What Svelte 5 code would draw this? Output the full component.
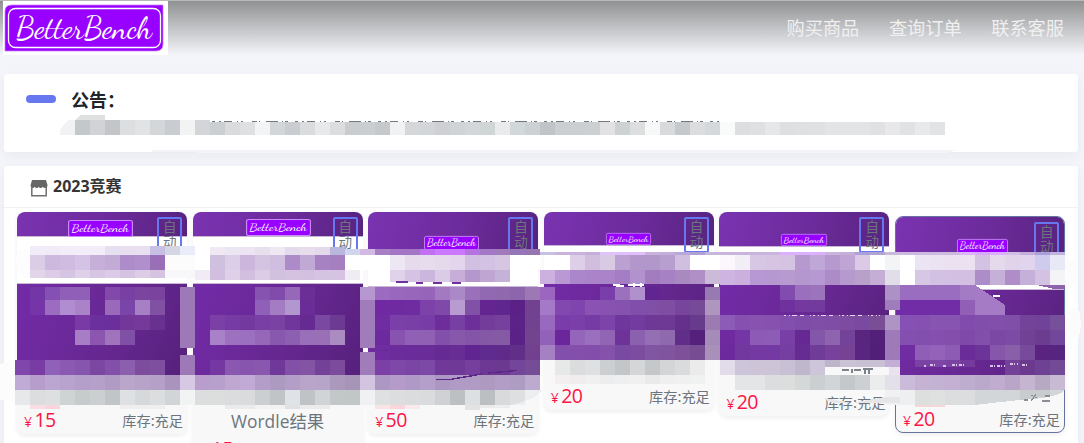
<script>
  const nav = ['购买商品', '查询订单', '联系客服'];

  // head: purple strip above the white band, band: white strip, body: purple block below
  const goods = [
    { head: 24, band: 48, body: 91, h: 222, price: '15', lx: 51, ly: 8, lw: 65, lh: 17 },
    { head: 24, band: 48, body: 91, h: 252, price: '15', lx: 53, ly: 7, lw: 65, lh: 17, title: 'Wordle结果' },
    { head: 37, band: 38, body: 88, h: 222, price: '50', lx: 56, ly: 24, lw: 55, lh: 14 },
    { head: 33, band: 39, body: 76, h: 198, price: '20', lx: 62, ly: 21, lw: 45, lh: 12 },
    { head: 34, band: 38, body: 76, h: 204, price: '20', lx: 62, ly: 22, lw: 46, lh: 12 },
    { head: 36, band: 37, body: 85, h: 217, price: '20', lx: 61, ly: 22, lw: 51, lh: 14, hover: true }
  ];

  // Tile runs: [x, y, height, colours], each tile 15px wide, "-" leaves a hole
  const runs = [
    [60, 120, 15, 'f1f2f4 c3c8cb d1d3d7 c2c6c9 dddee0 e2e3e5 d3d7da c9cdd1 f2f4f4 d3d5d9'],
    [210, 122, 13, 'cbcfd2 dadbdd dfe0e2 f3f4f6 d2d6d9 c9ccd0 dbdcde e8e9eb dcdddf c9cdcf caced0 c5c9cb f1f2f4 d6d7da d3d6d8 cfd0d4 d0d4d6 d3d7d9 d0d5d6 e9ebec d2d7d9 ccd1d3 c0c4c9 cbcfd1 cccfd2 ccd0d2 e2e2e4 cdd2d4 dddee0 f7f9f8 d9dadb c5c9cc dcdddf d5d9db f8fbfa dddee0 dfe0e1 e6e7e9 dddfe0 dfe0e1 e0e1e2 e3e4e6 e3e4e5 e3e4e6 e0e1e3 e8e8ea e1e2e3 e8e9eb e2e3e5'],

    [30, 246, 9, 'f2ecf8 f0ebf7 f2edf8 f2edf8 f2edf8 e6dff0 e8e0f0 e8e0ef c8c0e4 d4d6e6 eaecf9'],
    [30, 255, 15, 'dccde6 cdb9de d0bce0 d4c3e4 c6b0d9 c2abd5 ae8bc9 b08fcd 9970b8 fcfcfd fcfcfd'],
    [30, 270, 8, 'e2d5ea ddcce7 d6c4e3 dfd0e9 d6c5e3 dccbe6 d5c3e1 dccce6 d6c3e2 f8f7fa f8f7fa'],
    [30, 287, 13, '7236a6 8550b4 9060b8 9060b8 - 8249aa 7840a2 7b459f 7a449e'],
    [30, 300, 15, '7535a8 9b6cbf b08cd0 a982c7 - 9a69ba 7a45a8 a67fc4 8051a3'],
    [75, 315, 15, '793aa6 6c2f9e 6b2f9b 733699 74399a 68308f'],
    [75, 330, 15, 'a77dc5 8b55b0 a074bd 8050a6'],
    [15, 360, 15, '8046ac 793ca5 9061b8 8b59b2 8655ae 7b47a3 8250a8 8b5eae 7d4c9f 7e4f9f'],
    [15, 375, 15, 'c0aad6 b69dcb bba5d1 b8a2ce b39fc9 b4a0c9 af9bc3 baa6cb b6a3c8 b5a1c8 aa94bd d7c8e3'],
    [15, 390, 15, 'e6e8e9 dcdddf dedfe1 ced3d3 c6cbcc cbcfd1 c0c5c8 dfe0e2 d5d9db dcddde d2d5d7 f2f4f3'],
    [30, 405, 4, 'f9dde2 fbd5dd - - - - efeff0 efeff0 efeff0'],
    [180, 287, 61, '9d79b8'],
    [180, 355, 20, '9d79b8'],

    [210, 247, 8, 'f0e8f2 ece6f2 ece4f2 e8dfed efe7f2 e4daee e8dcec e3d9eb bab7de'],
    [345, 249, 6, 'd1d5ed d2b8e3'],
    [210, 255, 15, 'd0c0e0 dccde8 ccb6db d4c3e1 cfbedf ac8bc8 c0a9d4 a682c2 a57fc0 ffffff ffffff'],
    [195, 270, 10, 'f0ebf5 d2bfdf dfcfe8 d2bfe0 dccce6 d2c0df d5c2e1 d3bfdf d5c4e1 d5c3e1 f0ecf4'],
    [255, 287, 13, '8654b0 814bac 9767b9 6a2e96'],
    [255, 300, 15, '9060b8 a47cc3 b297cf 6a2d97'],
    [210, 315, 15, '7b40a6 763ba5 74399f 793fa4 7a42a3 71369b 662b93 7b48a1 6c3a92'],
    [210, 330, 15, 'a881c9 9e71c0 9c70c0 9667b9 8858ae 8c5fb0 996fb9 996fb6 aa8bc2'],
    [210, 360, 15, '7538a3 8b58b1 8855ae 8957ae 703898 8250a7 8454a4 744199 7d4b9c'],
    [195, 375, 15, 'b99dcc b8a0cd bfa7d2 c1aad5 b49dc9 ad9ac0 b29ec7 b8a5c9 b6a5c9 ac98bd a795b8 d3c5df'],
    [195, 390, 15, 'dcddde dcdddd dbdcdd d9dbdd cbcfd2 c0c4c7 dfe2e6 c0c3c6 d1d4d6 c2c7c8 c1c6c7 f1f1f3'],
    [225, 405, 4, 'ebebec ebebec f2f2f3 f2f2f3 e0e1e3 ebebeb ebebeb'],
    [360, 287, 13, 'b697cf'],
    [360, 300, 48, 'a17cbb'],
    [360, 352, 23, 'a17cbb'],
    [360, 375, 15, 'd3c5df'],

    [375, 249, 6, 'a87fc4 a375c4 a375c4 c070f0 cc78ff cc77fe b473e0 a377c5 a07abb 9675b8 9675b0'],
    [375, 255, 15, 'ffffff ede7f4 e7daec e7dcee e5d9ec e2d5ec d2c0e2 d3c2e4 d6c6e2 ffffff ffffff'],
    [390, 270, 12, 'e0d3e9 d6c2e3 cbb6dd dacbe6 c6aed9 b498cd bfa5d2 c5b2d9'],
    [375, 287, 13, '9b6bc0 9967be 9866bb 9664b8 a37ac1 ab89c7 9b70ba 9169b3 8f68ae 8d65ad 9c79b4'],
    [375, 300, 15, '7029a3 6f2aa1 6f2ba0 7c42aa 7f49a9 b79bd1 8151a8 642590 60268f 5b2186 71428f'],
    [375, 315, 15, '702ca1 7b3faa 7a3fa6 783ca6 6d2e9b 773fa4 6d2f99 733b9a 75419c 5b2388 71428f'],
    [375, 330, 15, '6c2a9f 8853b0 905fb6 9060b5 8250aa 8757ab 8354a7 8458a5 835aa3 5a2287 73448e'],
    [375, 345, 15, '702da2 6c2d9b 6b2c9b 6a2c98 662a95 682d95 602590 602b8e 5f2a89 622f88 71418f'],
    [375, 360, 15, '7b3fa6 7e48a9 7b45a5 7d49a6 703999 6f3997 773f9d 6c3893 6b3990 74469b 754d96'],
    [375, 375, 15, 'ad98c4 b49bc9 af99c6 b39fc9 ac97c2 af9bc5 b09bc4 ae99c0 b29dc6 af9cc2 bcabcf'],
    [375, 390, 15, 'dfe1e1 dcdddf dbdcde d9dbdc cfd1d4 bcc0c3 dde0e3 bbbfc2 d8dadc dedfe1'],
    [375, 405, 4, 'f8e5e8 f9d5da fbeaed'],
    [465, 405, 5, 'e3e3e4'],
    [480, 405, 3, 'ebebec ebebec'],

    [540, 252, 3, 'c8c0e0 c9b3dd c9b3dd c4aedb dfc3fa e0bfff e0bfff c9b3dd c4aedb b9a8dc b0a0d4 c4b8df'],
    [555, 255, 15, 'ffffff decfe9 d1bedf d9cae4 bba0d2 b396cc b297cb b79fd0 d1bfe0 ffffff ffffff'],
    [540, 270, 14, 'cbb0e0 ba98d4 ac86cb ab83c9 aa84c9 a57dc4 b192cd a27cbf a681c3 a889c0 af8fc6 cbbbd9'],
    [540, 287, 13, '9a66c0 - - - 7a3eab 9b70bc b091cd 602591 - - - 977ab1'],
    [540, 300, 15, 'a379c8 8248b0 8044ae 8952b3 8752b0 8552ad 824eab 8050a7 7f4ea3 77459b 764a97 ae96bf'],
    [540, 315, 15, '9968bf 793caa 7a3fa8 763ba4 7c44a8 6f379d 733b9f 6d3896 6e3895 65308c 673a8c 9c7bb1'],
    [540, 330, 15, '9261ba 6b269c 9564bb 9a6fbe 9264b4 6d3399 8b60ae 956fb4 8f69ad 602d88 54207c a58bb7'],
    [540, 345, 15, 'a581c3 834fad 834fab 834eab 8453a9 784aa2 7c4ca1 8055a1 81549f 7e509a 774c92 a890b9'],
    [555, 360, 15, 'e7e9e9 dbdcdd dfe0e2 cbcfd1 c2c6c9 d5d6d8 c4c8cb d3d5d6 dadbdc ebebeb'],
    [555, 375, 9, 'f3eff0 f1edee f1f0f0 ededed eeeff0 f0f0f0 eaeaeb efefef f0f0f0 f0f1f1'],

    [720, 252, 3, 'c9b5dc c9b5dc c9b5dc c9b5dc dcb0ff dcb0ff dcb0ff c9b5dc c4aedb aca0da b4a4d0 cab9dd'],
    [720, 255, 15, 'fbf7fc f2eef5 d7c7e4 d6c4e2 d4c4e1 b699cf bfa7d7 b699cf bea5d4 dacae6 ffffff f2f4f5'],
    [720, 270, 15, 'ceb4e0 cbafdc b898d4 b698d0 b79ad0 b497ce b898d2 ac8bc6 b59acd b8a0cb c4aed5 e1dde9'],
    [780, 285, 15, '814cae 9a70be 9c74bb'],
    [780, 300, 12, '6e319d 74389f 733a9e'],
    [720, 315, 15, '8c5bb8 8650b1 8752b0 8651af 834fae 804ca9 804ea7 7f4da6 7d4ca1 794aa0 7a4d97 a98cc3'],
    [720, 330, 15, '6f2a9f 7435a5 8d5ab6 8d5cb5 7840a6 662893 8456a9 8d64ad 734299 5a257f 521f79 9d7ab9'],
    [720, 345, 15, '6c299d 7337a0 7439a3 7439a3 753ea1 662c91 6f3c97 78429c 754294 592581 511f78 9d7ab9'],
    [720, 360, 15, 'e1dbea cdc5d9 cdc4d8 cdc4d8 c8c1d5 bfb8cd cdc5da'],
    [825, 360, 7, 'bfb5cb cac2d5 c8c0d3 c8c0d3'],
    [885, 360, 7, 'c3aed5'],
    [885, 367, 8, 'e9e3ef'],
    [735, 375, 15, 'e4e5e7 e3e5e6 dcddde dcdddd d5d8d9 cbcfd2 d2d5d8 c4c8cb ccd0d3 ebedec e3e1ec'],
    [885, 285, 15, 'ac91c6 9b6dc0 9b6dc0 9b6dc0 9b6dc0 a37bc5'],
    [885, 300, 10, '9f7cba'],
    [900, 300, 15, '702da5 702da5 702da5 702da5 925fb7 a77dc5'],

    [900, 252, 3, 'cdbbdf cdbbdf cdbbdf cdbbdf dcb4fa d9a9ff dcaeff d0bce4 c4aedb aaa0dc c0b4dc'],
    [900, 255, 15, 'ffffff ebe4f2 ece3f2 ebe1f1 ebe1f1 d3c2e2 e5daec e0d3ea e0d5ec cfcbec e7e9f7'],
    [900, 270, 15, 'ffffff d6c7e4 d3c1e3 d2bfe2 d2bfe2 ad8dc8 c5b1d8 ae8dc9 c5b0d9 d4c2e2 f4f4f6'],
    [885, 315, 15, 'ae94c5 8651b4 8550b2 8854b1 8755b1 804bad 814eac 8250aa 804fa7 724399 71429a 76509a'],
    [885, 330, 15, '9f7ab9 8450af 834fae 844fae 834eac 7e49a8 8250aa 7b48a4 7c4ca4 704195 6b3c90 70479a'],
    [885, 345, 15, '9f7ab9 702ca3 8f5eb7 9463b9 8d5bb3 6a2c98 6c3499 8556a9 8a5faa 774a9b 59237f 562580'],
    [915, 360, 7, '7a42a3 7d47a5 7a43a1 743b9c'],
    [1005, 360, 15, '744198 6b3a8f 6e4194 724a95'],
    [885, 375, 15, 'e3e0ea cabbdb c6b3d4 c4b2d5 c4b0d2 beadcf bba9cc bfacce b9a5c7 c5b5d1 b7a9c3 c9bad4'],
    [885, 390, 15, 'f0f1f2 eeeff0 dddfdf dfe1e1 dcdddf dbddde'],
    [915, 405, 2, 'f7d6da f7d6da']
  ];

  const tiles = runs.flatMap(([x, y, h, colours]) =>
    colours.split(' ').map((c, i) => ({ x: x + i * 15, y, h, c })).filter((t) => t.c !== '-')
  );
</script>

{#snippet logo(cls)}
  <svg class={cls} viewBox="0 0 165 54" preserveAspectRatio="none">
    {#if cls === 'brand'}
      <rect width="165" height="54" fill="#fff" />
      <path d="M2 10Q2 4 9 4H160V43Q160 50 153 50H2Z" fill="#9800ff" stroke="#c77bff" stroke-width=".7" />
      <rect x="5.5" y="7.5" width="152" height="39" rx="7" fill="none" stroke="#fff" stroke-width="1.3" />
    {:else}
      <rect x="1.5" y="1.5" width="162" height="51" rx="6" fill="#9800ff" stroke="#c98af8" stroke-width="3" />
    {/if}
    <text x={cls === 'brand' ? 13 : 9} y={cls === 'brand' ? 36.5 : 39} textLength={cls === 'brand' ? 136 : 146} lengthAdjust="spacingAndGlyphs">BetterBench</text>
  </svg>
{/snippet}

<div class="page">
  <header>
    {@render logo('brand')}
    <nav>
      {#each nav as item}<a href="#top">{item}</a>{/each}
    </nav>
  </header>

  <section class="notice">
    <span class="pill"></span>
    <h2>公告：</h2>
  </section>

  <section class="shop">
    <div class="shop-head">
      <svg width="18" height="18" viewBox="0 0 18 18">
        <path d="M2 1H16L17.6 6.5Q17.2 9 15.2 9Q13.4 9 12.8 7.8Q12 9 10.6 9Q9.3 9 8.8 7.8Q8 9 6.8 9Q5.4 9 4.8 7.8Q4 9 2.7 9Q.8 9 .5 6.5Z" fill="#666" />
        <path d="M1.8 8V16.8H16.2V8" fill="none" stroke="#707070" stroke-width="1.5" />
      </svg>
      <h3>2023竞赛</h3>
    </div>
    <div class="goods">
      {#each goods as g}
        <article class:hover={g.hover} class:tall={g.title} style:height="{g.h}px">
          <div class="cover">
            <div class="head" style:height="{g.head}px"></div>
            <div class="band" style:height="{g.band}px"></div>
            <div class="body" style:height="{g.body}px"></div>
            <div class="mini" style:left="{g.lx}px" style:top="{g.ly}px" style:width="{g.lw}px" style:height="{g.lh}px">
              {@render logo('small')}
            </div>
            <span class="tag">自动</span>
          </div>
          {#if g.title}<h4>{g.title}</h4>{/if}
          <footer>
            <span class="price">{#if !g.title}<i>¥</i>{/if}{g.price}</span>
            {#if !g.title}<span class="stock">库存:充足</span>{/if}
          </footer>
        </article>
      {/each}
    </div>
  </section>

  <svg class="mosaic" width="1084" height="443" viewBox="0 0 1084 443" shape-rendering="crispEdges">
    <path d="M152 150H956L949 153H208L187 152H152Z" fill="#f3f4f7" />
    <path d="M75 120L80 115H105V120Z" fill="#dfe1e0" />
    <path d="M212 121.5H722" stroke="#747980" stroke-dasharray="3 4 2 3 8 5 1 3 2 9 5 2 1 6 12 4 1 2 3 7" />
    <path d="M0 364L15 359V402L0 400Z" fill="#fcfcfc" />
    <path d="M1065 255Q1077 260 1077 272Q1077 286 1065 288ZM1065 308H1078Q1083 320 1079 337H1072Q1072 362 1065 364Z" fill="#fcfcfc" />
    <path d="M17 250H30V278H26Q17 275 16 262Z" fill="#fdfcfe" />
    {#each tiles as t}
      <rect x={t.x} y={t.y} width="15" height={t.h} fill="#{t.c}" />
    {/each}
    <path d="M60 120H69Q62 124 60 133Z" fill="#fff" />
    <path d="M975 285H1065V289H985Z" fill="#fff" />
    <path d="M975 285L1005 305V315H975Z" fill="#a47bc4" />
    <path d="M1037 285H1065V289H1054Z" fill="#8c65aa" />
    <path d="M993 296H1000" stroke="#fff" stroke-width="1.5" />
    <path d="M975 390H1065Q1058 398 1020 400Q1000 402 975 405Z" fill="#d3d6d8" />
    <path d="M1020 390H1050V396L1020 400Z" fill="#c8ccce" />
    <path d="M525 390H543Q536 398 525 401Q510 406 495 408V405H525Z" fill="#eceef0" />
    <path d="M825 398L852 403L885 397H900V403H855L835 403L825 400Z" fill="#e6e6e8" />
    <path d="M368 349.5H393L427 348.5" stroke="#6b2c9b" stroke-width="2" fill="none" />
    <path d="M436 379.5H450L482 374M488 373L517 370.5" stroke="#5c2588" stroke-width="1.4" fill="none" />
    <path d="M396 282H408M416 283H423M433 283H442M452 283H461" stroke="#7030a0" stroke-width="1.5" />
    <path d="M613 285H620M616 286H624M628 285H644M634 283V287M641 283V287" stroke="#fff" stroke-width="1.4" />
    <path d="M784 315.5H880" stroke="#e6d9ee" stroke-dasharray="2 3 1 2 5 3 4 6 1 2" />
    <path d="M924 366H926M930 365H936M943 366H947M952 365H966M990 366H1005M1010 364H1018M1022 365H1028" stroke="#d6c2e2" stroke-width="2" stroke-dasharray="3 1 1 2" />
    <path d="M837 368L855 373H875V375H885V367H889V375H862Z" fill="#f8f8f8" />
    <path d="M842 370H849M852 369V373M854 370H861M863 369H873M865 369V374M869 370V374" stroke="#7b828a" stroke-width="1.3" />
    <path d="M1031 395L1037 398M1036 394L1031 401M1045 396H1050M1042 401H1050M1024 400H1028" stroke="#8a8f95" stroke-width="1.3" />
  </svg>
</div>

<style>
  :global(body) { background: #f4f5fa; }
  .page {
    position: relative;
    width: 1084px;
    height: 443px;
    overflow: hidden;
    background: #f4f5fa;
    font-family: "Open Sans", "Noto Sans CJK SC", sans-serif;
  }
  header {
    box-sizing: border-box;
    height: 55px;
    display: flex;
    justify-content: space-between;
    align-items: flex-start;
    padding: 0 20px 0 3px;
    border-top: 1px solid #b6b9ba;
    background: linear-gradient(#8f9192, #f4f5fa);
  }
  .brand { display: block; width: 165px; height: 54px; flex: none; }
  svg text { font: 32px "Dancing Script", cursive; fill: #fff; }
  nav { display: flex; gap: 29.6px; padding-top: 12px; }
  nav a { font: 18.2px/28px "Noto Sans CJK SC", sans-serif; color: #f0f0f0; text-decoration: none; }
  section { margin: 0 6px 0 4px; background: #fff; border-radius: 3px; box-shadow: 0 4px 12px rgba(40, 40, 70, .05); }
  .notice { box-sizing: border-box; height: 78px; margin-top: 19px; padding: 12px 22px; display: flex; gap: 15px; }
  .pill { width: 30px; height: 8px; margin-top: 9px; border-radius: 4px; background: #6777ef; }
  h2, h3, h4 { margin: 0; }
  h2 { font: bold 18px/26px "Noto Sans CJK SC", sans-serif; color: #212529; }
  .shop { margin-top: 14px; height: 300px; }
  .shop-head { box-sizing: border-box; height: 42px; display: flex; align-items: center; gap: 6px; padding-left: 26px; border-bottom: 1px solid #f1f1f3; }
  .shop-head svg { margin-top: 2px; }
  h3 { font-size: 16px; line-height: 24px; margin: -2px 0 0 -1px; color: #343434; }
  .goods { display: flex; align-items: flex-start; gap: 5.6px; padding: 4px 0 0 13px; }
  article {
    width: 170px;
    flex: none;
    box-sizing: border-box;
    display: flex;
    flex-direction: column;
    overflow: hidden;
    border-radius: 8px;
    background: #f8f8f8;
    box-shadow: 0 2px 5px rgba(0, 0, 0, .07);
  }
  article.hover { margin-top: 4px; border: 1px solid #66749f; }
  .cover { position: relative; flex: none; }
  .head { background: linear-gradient(100deg, #7a33b1, #6c2b9b 55%, #57237f); }
  .band { background: #fff; box-sizing: border-box; border: solid #c9b8d4; border-width: 1px 0; }
  .body { background: linear-gradient(115deg, #732ba8, #65278f 60%, #55207b); }
  .mini { position: absolute; }
  .small { display: block; width: 100%; height: 100%; overflow: visible; }
  .small text { font-size: 37px; }
  .tag {
    position: absolute;
    top: 5px;
    right: 5px;
    box-sizing: border-box;
    width: 25px;
    height: 36px;
    border: 2px solid #6777ef;
    border-radius: 2px;
    padding: 0 4px;
    font: 13.5px/14.5px "Noto Sans CJK SC", sans-serif;
    color: #6c757d;
    word-break: break-all;
  }
  h4 { margin: 33px 0 -8px; text-align: center; font-size: 17.4px; line-height: 26px; font-weight: 400; color: #6c757d; }
  footer { margin-top: auto; display: flex; justify-content: space-between; align-items: baseline; padding: 0 4px 0 7px; line-height: 27px; }
  .hover footer { padding: 0 4px 0 7px; margin-bottom: -1px; }
  .price { font-size: 19.5px; letter-spacing: -.6px; color: #fc1545; position: relative; top: 1px; }
  .price i { font-style: normal; font-size: 14px; margin-right: 3px; }
  .stock { font: 14.2px/24px "Noto Sans CJK SC", sans-serif; color: #6c757d; }
  .tall footer { margin-top: 0; padding: 8px 0 0 19px; }
  .mosaic { position: absolute; left: 0; top: 0; pointer-events: none; }
</style>
